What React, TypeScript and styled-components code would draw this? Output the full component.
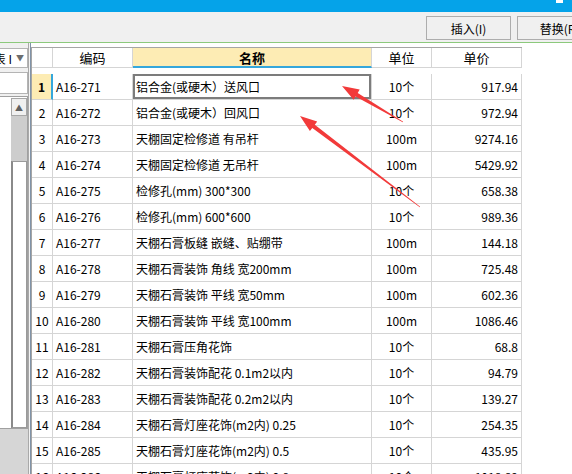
import React from "react";
import styled, { createGlobalStyle } from "styled-components";

const Global = createGlobalStyle`
  html, body { margin: 0; padding: 0; background: #ffffff; }
  body { font-family: "Noto Sans CJK SC", "Liberation Sans", sans-serif; font-size: 12px; color: #000; }
  #root { width: 572px; height: 474px; overflow: hidden; position: relative; }
`;

const Page = styled.div`
  width: 572px;
  height: 474px;
  display: flex;
  flex-direction: column;
  overflow: hidden;
`;

const TitleBar = styled.div`
  height: 12px;
  flex: none;
  background: #05a3e9;
  display: flex;
  justify-content: flex-end;
  align-items: flex-start;
  padding-right: 9px;
`;

const TitleMark = styled.div`
  width: 7px;
  height: 3px;
  background: #ffffff;
`;

const Toolbar = styled.div`
  height: 31px;
  flex: none;
  background: #f0f0f0;
  border-bottom: 1px solid #8cc97c;
  display: flex;
  align-items: flex-start;
  padding-top: 4px;
  box-sizing: border-box;
  overflow: hidden;
`;

const ButtonRow = styled.div`
  margin-left: auto;
  margin-right: -30px;
  display: flex;
  gap: 6px;
`;

const ToolButton = styled.div`
  width: 85px;
  height: 24px;
  box-sizing: border-box;
  border: 1px solid #adadad;
  background: #f0f0f0;
  display: flex;
  align-items: center;
  justify-content: center;
  font-size: 12px;
  white-space: nowrap;
`;

const Main = styled.div`
  flex: 1;
  display: flex;
  min-height: 0;
  background: #ffffff;
`;

const LeftPanel = styled.div`
  width: 28px;
  flex: none;
  background: #f0f0f0;
  display: flex;
  flex-direction: column;
  padding-top: 5px;
  box-sizing: border-box;
`;

const Combo = styled.div`
  height: 20px;
  flex: none;
  box-sizing: border-box;
  border: 1px solid #b4b4b4;
  border-left: none;
  background: #ffffff;
  display: flex;
  align-items: center;
  justify-content: flex-end;
  overflow: hidden;
  white-space: nowrap;
  padding-right: 3px;
  gap: 4px;
`;

const ComboArrow = styled.span`
  color: #6d6d6d;
  font-size: 8px;
  line-height: 1;
`;

const InputBox = styled.div`
  margin-top: 4px;
  height: 22px;
  flex: none;
  box-sizing: border-box;
  border: 1px solid #b4b4b4;
  border-left: none;
  background: #ffffff;
`;

const ListBox = styled.div`
  margin-top: 2px;
  height: 333px;
  flex: none;
  box-sizing: border-box;
  border: 1px solid #a0a0a0;
  border-left: none;
  background: #ffffff;
  display: flex;
  justify-content: flex-end;
  padding: 1px 0 0 0;
`;

const ScrollBar = styled.div`
  width: 16px;
  display: flex;
  flex-direction: column;
`;

const ScrollUp = styled.div`
  height: 18px;
  flex: none;
  box-sizing: border-box;
  border: 1px solid #a7a7a7;
  background: #f0f0f0;
  display: flex;
  align-items: center;
  justify-content: center;
  color: #606060;
  font-size: 8px;
`;

const ScrollTrack = styled.div`
  height: 45px;
  flex: none;
  background: #cdcdcd;
`;

const ScrollThumb = styled.div`
  flex: 1;
  box-sizing: border-box;
  border: 1px solid #9a9a9a;
  border-left: 2px solid #8a8a8a;
  background: #ffffff;
`;

const LeftFill = styled.div`
  flex: 1;
  background: #d6d6d6;
`;

const Splitter = styled.div`
  width: 3px;
  flex: none;
  box-sizing: border-box;
  background: #f4f4f4;
  border-left: 1px solid #a9a9a9;
  border-right: 1px solid #8093a8;
`;

const GridArea = styled.div`
  flex: 1;
  padding-top: 4px;
  background: #ffffff;
  overflow: hidden;
`;

const Grid = styled.div`
  display: grid;
  grid-template-columns: 21px 80px 239px 60px 90px;
  grid-auto-rows: 26px;
  border-top: 1px solid #a5a5a5;
  border-left: 1px solid #a5a5a5;
  width: max-content;
`;

type CellProps = {
  $align?: "left" | "center" | "right";
  $bg?: string;
  $bold?: boolean;
  $selected?: boolean;
  $blueRight?: boolean;
  $blueBottom?: boolean;
  $header?: boolean;
};

const Cell = styled.div<CellProps>`
  box-sizing: border-box;
  height: ${(p) => (p.$header ? "20px" : "26px")};
  border-right: ${(p) => (p.$blueRight ? "2px solid #35a7dc" : "1px solid #d5d5d5")};
  border-bottom: ${(p) => (p.$blueBottom ? "2px solid #35a7dc" : "1px solid #d5d5d5")};
  background: ${(p) => p.$bg || "#ffffff"};
  display: flex;
  align-items: center;
  justify-content: ${(p) =>
    p.$align === "center" ? "center" : p.$align === "right" ? "flex-end" : "flex-start"};
  padding: ${(p) => (p.$align === "right" ? "0 3px 0 0" : p.$align === "left" ? "0 0 0 3px" : "0")};
  font-weight: ${(p) => (p.$bold ? 700 : 400)};
  font-size: ${(p) => (p.$header ? "13px" : "12px")};
  white-space: nowrap;
  overflow: hidden;
  box-shadow: ${(p) => (p.$selected ? "inset 0 0 0 2px #7c7c7c" : "none")};
`;

const Overlay = styled.svg`
  position: absolute;
  left: 0;
  top: 0;
  width: 572px;
  height: 474px;
  pointer-events: none;
`;

type Row = [string, string, string, string];

const rows: Row[] = [
  ["A16-271", "铝合金(或硬木）送风口", "10个", "917.94"],
  ["A16-272", "铝合金(或硬木）回风口", "10个", "972.94"],
  ["A16-273", "天棚固定检修道 有吊杆", "100m", "9274.16"],
  ["A16-274", "天棚固定检修道 无吊杆", "100m", "5429.92"],
  ["A16-275", "检修孔(mm) 300*300", "10个", "658.38"],
  ["A16-276", "检修孔(mm) 600*600", "10个", "989.36"],
  ["A16-277", "天棚石膏板缝 嵌缝、贴绷带", "100m", "144.18"],
  ["A16-278", "天棚石膏装饰 角线 宽200mm", "100m", "725.48"],
  ["A16-279", "天棚石膏装饰 平线 宽50mm", "100m", "602.36"],
  ["A16-280", "天棚石膏装饰 平线 宽100mm", "100m", "1086.46"],
  ["A16-281", "天棚石膏压角花饰", "10个", "68.8"],
  ["A16-282", "天棚石膏装饰配花 0.1m2以内", "10个", "94.79"],
  ["A16-283", "天棚石膏装饰配花 0.2m2以内", "10个", "139.27"],
  ["A16-284", "天棚石膏灯座花饰(m2内) 0.25", "10个", "254.35"],
  ["A16-285", "天棚石膏灯座花饰(m2内) 0.5", "10个", "435.95"],
  ["A16-286", "天棚石膏灯座花饰(m2内) 0.8", "10个", "1018.89"],
];

function arrowPoints(tx: number, ty: number, hx: number, hy: number): string {
  const dx = hx - tx;
  const dy = hy - ty;
  const len = Math.hypot(dx, dy);
  const ux = dx / len;
  const uy = dy / len;
  const nx = -uy;
  const ny = ux;
  const headLen = 17;
  const headHalf = 6;
  const neckHalf = 2;
  const tailHalf = 0.4;
  const kx = hx - ux * headLen;
  const ky = hy - uy * headLen;
  const pts: [number, number][] = [
    [tx + nx * tailHalf, ty + ny * tailHalf],
    [kx + nx * neckHalf, ky + ny * neckHalf],
    [kx + nx * headHalf, ky + ny * headHalf],
    [hx, hy],
    [kx - nx * headHalf, ky - ny * headHalf],
    [kx - nx * neckHalf, ky - ny * neckHalf],
    [tx - nx * tailHalf, ty - ny * tailHalf],
  ];
  return pts.map(([x, y]) => `${x.toFixed(1)},${y.toFixed(1)}`).join(" ");
}

export default function App() {
  return (
    <>
      <Global />
      <Page>
        <TitleBar>
          <TitleMark />
        </TitleBar>
        <Toolbar>
          <ButtonRow>
            <ToolButton>插入(I)</ToolButton>
            <ToolButton>替换(R)</ToolButton>
          </ButtonRow>
        </Toolbar>
        <Main>
          <LeftPanel>
            <Combo>
              <span>清单表 I</span>
              <ComboArrow>▼</ComboArrow>
            </Combo>
            <InputBox />
            <ListBox>
              <ScrollBar>
                <ScrollUp>▲</ScrollUp>
                <ScrollTrack />
                <ScrollThumb />
              </ScrollBar>
            </ListBox>
            <LeftFill />
          </LeftPanel>
          <Splitter />
          <GridArea>
            <Grid>
              <Cell $header />
              <Cell $header $align="center">编码</Cell>
              <Cell $header $align="center" $bold $bg="#fdecb4" $blueBottom>
                名称
              </Cell>
              <Cell $header $align="center">单位</Cell>
              <Cell $header $align="center">单价</Cell>
              {rows.map((r, i) => (
                <React.Fragment key={r[0]}>
                  <Cell
                    $align="center"
                    $bold={i === 0}
                    $bg={i === 0 ? "#fdecb4" : undefined}
                    $blueRight={i === 0}
                  >
                    {i + 1}
                  </Cell>
                  <Cell $align="left">{r[0]}</Cell>
                  <Cell $align="left" $selected={i === 0}>
                    {r[1]}
                  </Cell>
                  <Cell $align="center">{r[2]}</Cell>
                  <Cell $align="right">{r[3]}</Cell>
                </React.Fragment>
              ))}
            </Grid>
          </GridArea>
        </Main>
      </Page>
      <Overlay viewBox="0 0 572 474">
        <polygon points={arrowPoints(403, 122, 342, 86)} fill="#f23a3a" />
        <polygon points={arrowPoints(420, 207, 300, 116)} fill="#f23a3a" />
      </Overlay>
    </>
  );
}
